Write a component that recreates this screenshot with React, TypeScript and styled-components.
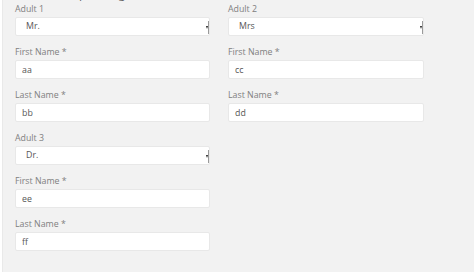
import styled, { createGlobalStyle } from "styled-components";

const GlobalStyle = createGlobalStyle`
  html, body {
    margin: 0;
    padding: 0;
    background: #ffffff;
    font-family: "Open Sans", "Liberation Sans", sans-serif;
    overflow: hidden;
  }
`;

const Panel = styled.div`
  margin-left: 2px;
  height: 272px;
  background: #f2f2f2;
  border-left: 1px solid #e9e9e9;
  box-sizing: border-box;
  padding: 3px 0 0 12px;
  overflow: hidden;
`;

const Heading = styled.div`
  margin: -16px 0 0 31px;
  height: 16px;
  font-size: 12px;
  line-height: 13px;
  color: #666;
  white-space: nowrap;
`;

const Columns = styled.div`
  display: grid;
  grid-template-columns: 195px 196px;
  column-gap: 18px;
  align-items: start;
`;

const Column = styled.div`
  display: flex;
  flex-direction: column;
`;

const Group = styled.div`
  display: flex;
  flex-direction: column;
  margin-bottom: 10px;
`;

const Label = styled.label`
  font-size: 8.8px;
  line-height: 12px;
  height: 12px;
  margin-bottom: 2px;
  color: #808080;
`;

const Field = styled.input`
  box-sizing: border-box;
  height: 19px;
  width: 100%;
  margin: 0;
  padding: 0 6px;
  border: 1px solid #e8e8e8;
  border-radius: 2px;
  background: #fff;
  font-family: "Open Sans", "Liberation Sans", sans-serif;
  font-size: 8.8px;
  color: #555;
  outline: none;
`;

const SelectBox = styled.div`
  position: relative;
  height: 19px;
  box-sizing: border-box;
  border: 1px solid #e8e8e8;
  border-radius: 2px;
  background: #fff;

  &::after {
    content: "";
    position: absolute;
    right: 0;
    top: 3px;
    bottom: 1px;
    width: 1px;
    background: #9a9a9a;
  }
`;

const Select = styled.select`
  appearance: none;
  -webkit-appearance: none;
  display: block;
  width: 100%;
  height: 17px;
  line-height: 17px;
  box-sizing: border-box;
  margin: 0;
  padding: 0 0 0 10px;
  border: none;
  background: transparent;
  font-family: "Open Sans", "Liberation Sans", sans-serif;
  font-size: 8.8px;
  color: #555;
  outline: none;
`;

const Arrow = styled.span`
  position: absolute;
  right: 1px;
  top: 8px;
  width: 0;
  height: 0;
  border-left: 1.5px solid transparent;
  border-right: 1.5px solid transparent;
  border-top: 3px solid #222;
`;

type Adult = { title: string; first: string; last: string };

const titles = ["Mr.", "Mrs", "Ms.", "Dr."];

const adults: Adult[] = [
  { title: "Mr.", first: "aa", last: "bb" },
  { title: "Mrs", first: "cc", last: "dd" },
  { title: "Dr.", first: "ee", last: "ff" },
];

function AdultForm({ index, adult }: { index: number; adult: Adult }) {
  return (
    <>
      <Group>
        <Label>Adult {index}</Label>
        <SelectBox>
          <Select defaultValue={adult.title}>
            {titles.map((o) => (
              <option key={o}>{o}</option>
            ))}
          </Select>
          <Arrow />
        </SelectBox>
      </Group>
      <Group>
        <Label>First Name *</Label>
        <Field defaultValue={adult.first} />
      </Group>
      <Group>
        <Label>Last Name *</Label>
        <Field defaultValue={adult.last} />
      </Group>
    </>
  );
}

export default function App() {
  return (
    <>
      <GlobalStyle />
      <Panel>
        <Heading>Enter passenger details</Heading>
        <Columns>
          <Column>
            <AdultForm index={1} adult={adults[0]} />
            <AdultForm index={3} adult={adults[2]} />
          </Column>
          <Column>
            <AdultForm index={2} adult={adults[1]} />
          </Column>
        </Columns>
      </Panel>
    </>
  );
}
